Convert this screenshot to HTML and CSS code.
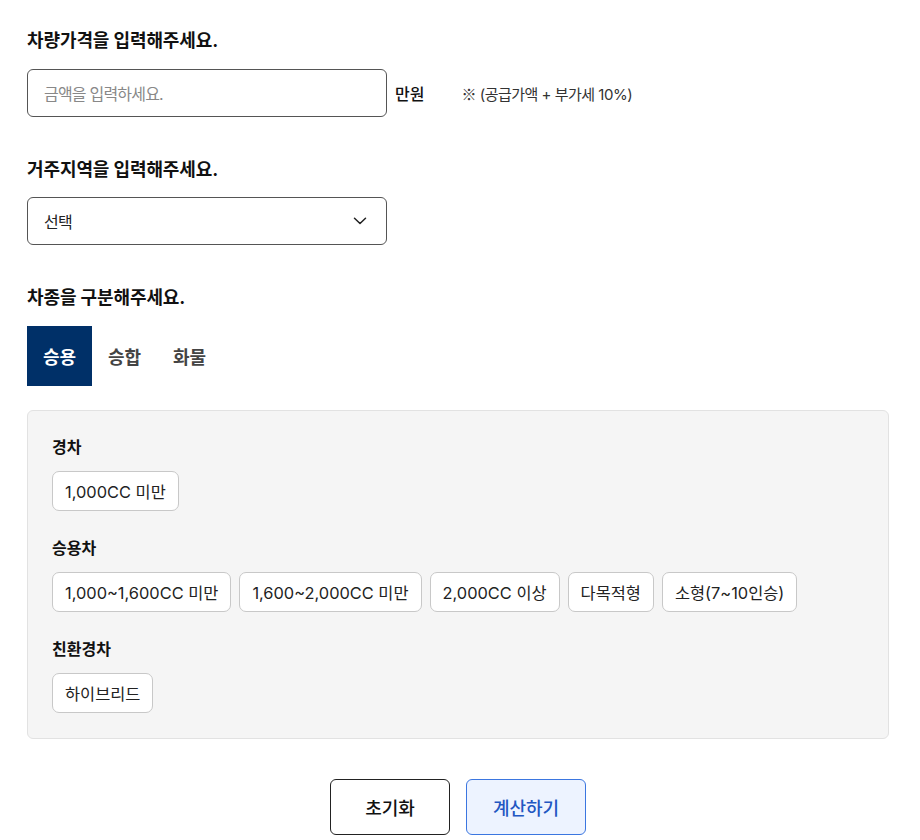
FILE: index.html
```html
<!DOCTYPE html>
<html lang="ko">
<head>
<meta charset="utf-8">
<link rel="stylesheet" href="styles.css">
</head>
<body>
<div class="wrap">
  <h2 class="title">차량가격을 입력해주세요.</h2>
  <div class="row">
    <div class="field"><span class="placeholder">금액을 입력하세요.</span></div>
    <span class="unit">만원</span>
    <span class="note"><span class="mark">※</span> (공급가액 + 부가세 10%)</span>
  </div>

  <h2 class="title gap tight">거주지역을 입력해주세요.</h2>
  <div class="row">
    <div class="field select">
      <span class="value">선택</span>
      <svg class="chev" width="14" height="8" viewBox="0 0 14 8"><path d="M1.5 1.2 L7 6.5 L12.5 1.2" fill="none" stroke="#222" stroke-width="1.5" stroke-linecap="round" stroke-linejoin="round"/></svg>
    </div>
  </div>

  <h2 class="title gap">차종을 구분해주세요.</h2>
  <div class="tabs">
    <div class="tab active">승용</div>
    <div class="tab">승합</div>
    <div class="tab">화물</div>
  </div>

  <div class="panel">
    <div class="group">
      <div class="glabel">경차</div>
      <div class="chips">
        <span class="chip">1,000CC 미만</span>
      </div>
    </div>
    <div class="group">
      <div class="glabel">승용차</div>
      <div class="chips">
        <span class="chip">1,000~1,600CC 미만</span>
        <span class="chip">1,600~2,000CC 미만</span>
        <span class="chip">2,000CC 이상</span>
        <span class="chip">다목적형</span>
        <span class="chip">소형(7~10인승)</span>
      </div>
    </div>
    <div class="group">
      <div class="glabel">친환경차</div>
      <div class="chips">
        <span class="chip">하이브리드</span>
      </div>
    </div>
  </div>

  <div class="actions">
    <button class="btn">초기화</button>
    <button class="btn primary">계산하기</button>
  </div>
</div>
</body>
</html>
```

FILE: styles.css
```css
* { box-sizing: border-box; }
html, body { margin: 0; padding: 0; background: #fff; }
body {
  font-family: "Inter", "Noto Sans CJK KR", sans-serif;
  color: #111;
}
.wrap {
  width: 862px;
  margin-left: 27px;
  padding-top: 27px;
}
.title {
  margin: 0 0 14px;
  font-size: 18px;
  line-height: 28px;
  font-weight: 700;
  letter-spacing: -0.1px;
  color: #111;
}
.title.gap { margin-top: 39px; }
.title.tight { margin-bottom: 13px; }
.row {
  display: flex;
  align-items: center;
}
.field {
  width: 360px;
  height: 48px;
  border: 1px solid #555;
  border-radius: 6px;
  display: flex;
  align-items: center;
  padding: 0 16px;
  font-size: 16px;
}
.placeholder { color: #888; letter-spacing: -0.8px; }
.select { justify-content: space-between; padding-right: 19px; }
.value { color: #222; letter-spacing: -0.6px; }
.unit {
  margin-left: 8px;
  font-size: 16px;
  font-weight: 500;
  color: #111;
}
.note {
  margin-left: 37px;
  font-size: 15px;
  color: #333;
  letter-spacing: -0.5px;
}
.mark { font-family: "Noto Sans CJK KR", sans-serif; font-size: 15px; }
.tabs { display: flex; }
.tab {
  width: 65px;
  height: 60px;
  display: flex;
  align-items: center;
  justify-content: center;
  font-size: 18px;
  font-weight: 700;
  color: #444;
}
.tab.active { background: #003068; color: #fff; }
.panel {
  margin-top: 24px;
  background: #f5f5f5;
  border: 1px solid #e2e2e2;
  border-radius: 6px;
  padding: 24px 24px 25px;
}
.group + .group { margin-top: 25px; }
.glabel {
  font-size: 16px;
  line-height: 24px;
  font-weight: 700;
  color: #111;
  margin-bottom: 12px;
}
.chips { display: flex; flex-wrap: wrap; gap: 8px; }
.chip {
  height: 40px;
  display: inline-flex;
  align-items: center;
  padding: 0 12px;
  background: #fff;
  border: 1px solid #c8c8c8;
  border-radius: 7px;
  font-size: 16.4px;
  color: #222;
}
.actions {
  margin-top: 40px;
  display: flex;
  justify-content: center;
  gap: 16px;
}
.btn {
  width: 120px;
  height: 56px;
  border: 1px solid #222;
  border-radius: 6px;
  background: #fff;
  font-family: inherit;
  font-size: 18px;
  font-weight: 500;
  color: #111;
}
.btn.primary {
  background: #edf3ff;
  border-color: #3b76e0;
  color: #2256c2;
}
```
